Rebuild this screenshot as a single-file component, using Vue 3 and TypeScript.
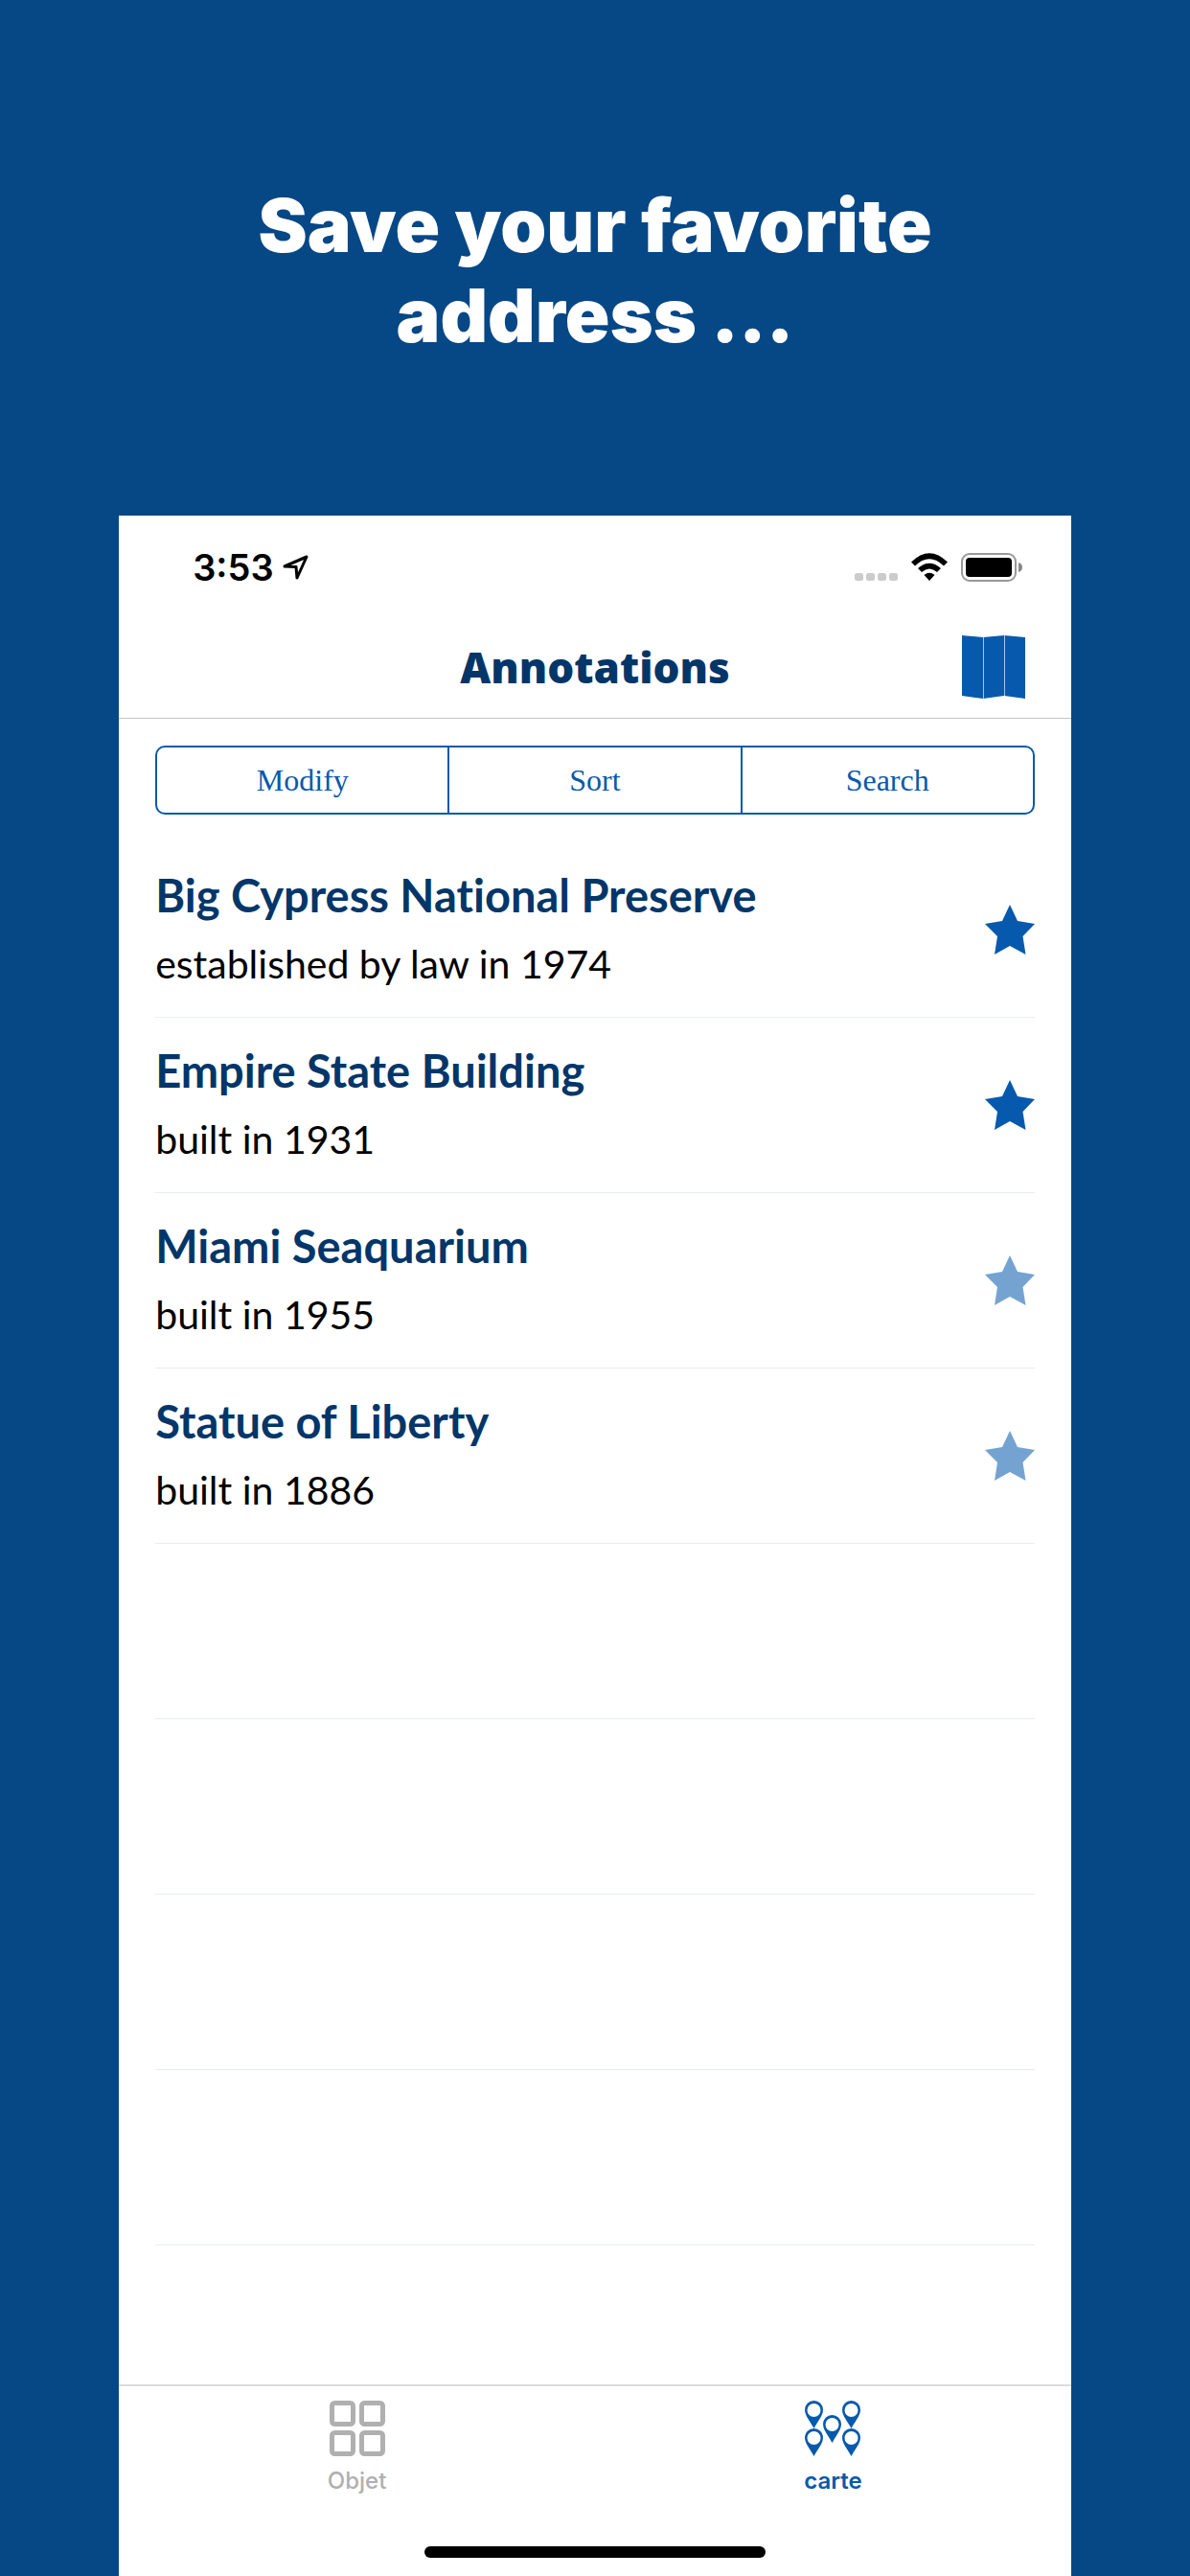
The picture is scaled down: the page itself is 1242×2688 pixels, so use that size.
<script setup lang="ts">
interface Annotation {
  name: string
  detail: string
  favorite: boolean
}

const annotations: Annotation[] = [
  { name: 'Big Cypress National Preserve', detail: 'established by law in 1974', favorite: true },
  { name: 'Empire State Building', detail: 'built in 1931', favorite: true },
  { name: 'Miami Seaquarium', detail: 'built in 1955', favorite: false },
  { name: 'Statue of Liberty', detail: 'built in 1886', favorite: false },
]
const emptyRows = 4
const actions: string[] = ['Modify', 'Sort', 'Search']
const pins: [number, number][] = [[0, 0], [39, 0], [19, 15], [0, 29], [39, 29]]
const tiles: [number, number][] = [[0, 0], [31, 0], [0, 31], [31, 31]]
</script>

<template>
  <div class="page">
    <h1 class="headline">Save your favorite<br />address ...</h1>

    <main class="phone">
      <div class="status">
        <div class="clock">
          <span>3:53</span>
          <svg width="27" height="26" viewBox="0 0 27 26" aria-hidden="true">
            <path d="M2 12 25 2 15 24 14 12.500Z" fill="none" stroke="#000" stroke-width="3" stroke-linejoin="round" />
          </svg>
        </div>
        <div class="indicators">
          <svg width="45" height="30" viewBox="0 0 45 30" fill="#cbcbcb" aria-hidden="true">
            <rect v-for="n in 4" :key="n" :x="(n - 1) * 12" y="21" width="9" height="8" rx="2.500" />
          </svg>
          <svg width="38" height="30" viewBox="0 0 38 30" aria-hidden="true">
            <path d="M0 9.500Q19-9 38 9.500L34 13.500Q19-1 4 13.500Z" />
            <path d="M7 16Q19 5.500 31 16L27 20Q19 13 11 20Z" />
            <path d="M13.500 23Q19 18.500 24.500 23L19 29Z" />
          </svg>
          <svg width="65" height="30" viewBox="0 0 65 30" aria-hidden="true">
            <rect x="1" y="1" width="56" height="28" rx="8" fill="none" stroke="#999" stroke-width="2" />
            <rect x="5" y="5" width="48" height="20" rx="4" />
            <path d="M60 10Q64 11 64 15Q64 19 60 20Z" fill="#888" />
          </svg>
        </div>
      </div>

      <header class="nav">
        <h2>Annotations</h2>
        <button class="map" type="button" aria-label="Map">
          <svg width="66" height="66" viewBox="0 0 66 66" aria-hidden="true">
            <path d="M0 0 22 2 44 0 66 2V66L44 63 22 66 0 63Z" fill="#0759ad" />
            <path d="M22.500 2V66M44.500 0V63" stroke="#a4c3e2" />
          </svg>
        </button>
      </header>

      <div class="segments">
        <button v-for="action in actions" :key="action" type="button">{{ action }}</button>
      </div>

      <ul class="list">
        <li v-for="item in annotations" :key="item.name" class="row">
          <div>
            <h3>{{ item.name }}</h3>
            <p>{{ item.detail }}</p>
          </div>
          <svg class="star" :class="{ muted: !item.favorite }" width="52" height="52" viewBox="0 0 52 52" aria-hidden="true">
            <path d="M26 0 34 17 52 20 39.500 33 42.500 52 26 43 10 52 13 33 0 20 18 17Z" />
          </svg>
        </li>
        <li v-for="n in emptyRows" :key="n" class="row" aria-hidden="true"></li>
      </ul>

      <footer>
        <nav class="tabs">
          <a href="#objet">
            <svg width="58" height="58" viewBox="0 0 58 58" fill="none" stroke="#b0b0b0" stroke-width="5" aria-hidden="true">
              <rect v-for="[x, y] in tiles" :key="`${x}-${y}`" :x="x + 2.500" :y="y + 2.500" width="22" height="22" rx="3" />
            </svg>
            <span>Objet</span>
          </a>
          <a href="#carte" class="active" aria-current="page">
            <svg width="58" height="58" viewBox="0 0 58 58" aria-hidden="true">
              <path
                v-for="[x, y] in pins"
                :key="`${x}-${y}`"
                :transform="`translate(${x} ${y})`"
                fill="#0759ad"
                fill-rule="evenodd"
                d="M9.500 0A9.500 9.500 0 0 1 19 9.500C19 16 13 22 9.500 29C6 22 0 16 0 9.500A9.500 9.500 0 0 1 9.500 0ZM9.500 3A7 7 0 1 0 9.500 17A7 7 0 1 0 9.500 3Z"
              />
            </svg>
            <span>carte</span>
          </a>
        </nav>
        <div class="home"></div>
      </footer>
    </main>
  </div>
</template>

<style>
body {
  margin: 0;
}
</style>

<style scoped>
* {
  box-sizing: border-box;
}
.page {
  display: flex;
  flex-direction: column;
  min-height: 100vh;
  padding: 0 10%;
  background: #064786;
  font-family: Lato, "Liberation Sans", sans-serif;
  font-variant-ligatures: none;
}
h1, h2, h3, p, ul {
  margin: 0;
  padding: 0;
}
button {
  padding: 0;
  border: 0;
  background: none;
}
svg {
  display: block;
}
.headline {
  padding: 188px 0 162px;
  color: #fff;
  font-family: Inter, sans-serif;
  font-size: 77px;
  font-weight: 900;
  line-height: 94px;
  text-align: center;
}
.phone {
  display: flex;
  flex: 1;
  flex-direction: column;
  background: #fff;
}
.status {
  display: flex;
  align-items: center;
  justify-content: space-between;
  height: 108px;
  padding: 0 50px 0 77px;
}
.clock {
  display: flex;
  align-items: center;
  gap: 9px;
  font: 600 38px/46px Inter, sans-serif;
}
.indicators {
  display: flex;
  gap: 14px;
}
.nav {
  display: grid;
  grid-template-columns: 1fr auto 1fr;
  align-items: center;
  height: 104px;
  padding: 0 48px 4px;
  border-bottom: 1px solid #c4c4c6;
}
.nav h2 {
  grid-column: 2;
  color: #023669;
  font-family: "Open Sans", sans-serif;
  font-size: 44px;
  font-weight: 800;
  line-height: 56px;
}
.map {
  justify-self: end;
}
.segments {
  display: flex;
  height: 72px;
  margin: 28px 38px 29px;
  border: 2px solid #0759ad;
  border-radius: 10px;
}
.segments button {
  flex: 1;
  color: #0759ad;
  font: 32px/40px "Liberation Serif", serif;
}
.segments button + button {
  border-left: 2px solid #0759ad;
}
.list {
  margin: 0 38px;
  list-style: none;
}
.row {
  display: flex;
  align-items: center;
  justify-content: space-between;
  height: 183px;
  border-bottom: 1px solid #e6eef5;
}
.row h3 {
  color: #023669;
  font-size: 47px;
  font-weight: 700;
  line-height: 72px;
}
.row p {
  color: #000;
  font-size: 41px;
  line-height: 72px;
}
.star {
  fill: #0759ad;
}
.star.muted {
  fill: #75a3d1;
}
footer {
  margin-top: auto;
  border-top: 2px solid #dcdcdc;
}
.tabs {
  display: flex;
}
.tabs a {
  display: flex;
  flex: 1;
  flex-direction: column;
  align-items: center;
  gap: 11px;
  padding-top: 15px;
  color: #b0b0b0;
  font: 500 24px/30px Inter, sans-serif;
  text-decoration: none;
}
.tabs .active {
  color: #0759ad;
  font-weight: 600;
}
.home {
  width: 356px;
  height: 12px;
  margin: 53px auto 19px;
  border-radius: 6px;
  background: #000;
}
</style>
